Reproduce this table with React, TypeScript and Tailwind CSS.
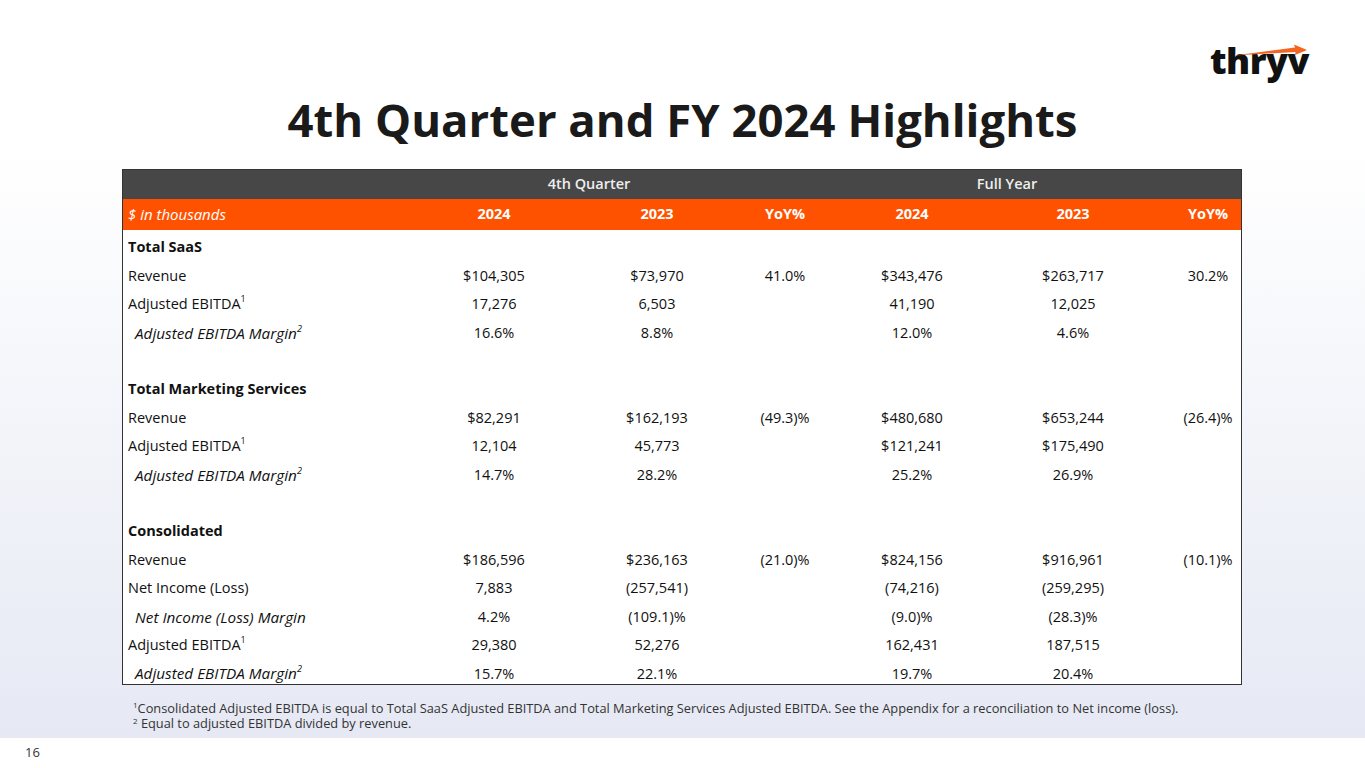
type Row =
  | { kind: 'section'; label: string }
  | { kind: 'blank' }
  | { kind: 'data'; label: string; sup?: string; italic?: boolean; values: string[] }

const rows: Row[] = [
  { kind: 'section', label: 'Total SaaS' },
  { kind: 'data', label: 'Revenue', values: ['$104,305', '$73,970', '41.0%', '$343,476', '$263,717', '30.2%'] },
  { kind: 'data', label: 'Adjusted EBITDA', sup: '1', values: ['17,276', '6,503', '', '41,190', '12,025', ''] },
  { kind: 'data', label: 'Adjusted EBITDA Margin', sup: '2', italic: true, values: ['16.6%', '8.8%', '', '12.0%', '4.6%', ''] },
  { kind: 'blank' },
  { kind: 'section', label: 'Total Marketing Services' },
  { kind: 'data', label: 'Revenue', values: ['$82,291', '$162,193', '(49.3)%', '$480,680', '$653,244', '(26.4)%'] },
  { kind: 'data', label: 'Adjusted EBITDA', sup: '1', values: ['12,104', '45,773', '', '$121,241', '$175,490', ''] },
  { kind: 'data', label: 'Adjusted EBITDA Margin', sup: '2', italic: true, values: ['14.7%', '28.2%', '', '25.2%', '26.9%', ''] },
  { kind: 'blank' },
  { kind: 'section', label: 'Consolidated' },
  { kind: 'data', label: 'Revenue', values: ['$186,596', '$236,163', '(21.0)%', '$824,156', '$916,961', '(10.1)%'] },
  { kind: 'data', label: 'Net Income (Loss)', values: ['7,883', '(257,541)', '', '(74,216)', '(259,295)', ''] },
  { kind: 'data', label: 'Net Income (Loss) Margin', italic: true, values: ['4.2%', '(109.1)%', '', '(9.0)%', '(28.3)%', ''] },
  { kind: 'data', label: 'Adjusted EBITDA', sup: '1', values: ['29,380', '52,276', '', '162,431', '187,515', ''] },
  { kind: 'data', label: 'Adjusted EBITDA Margin', sup: '2', italic: true, values: ['15.7%', '22.1%', '', '19.7%', '20.4%', ''] },
]

const grid = 'grid grid-cols-[291px_160px_166px_90px_164px_181px_66px]'
const headers = ['2024', '2023', 'YoY%', '2024', '2023', 'YoY%']

function Logo() {
  return (
    <div className="relative mt-[43px] mr-[56px] text-[36px] leading-none font-extrabold tracking-[-0.5px] text-[#111]">
      thryv
      <svg className="absolute left-0 top-0" width="100" height="20" viewBox="0 0 100 20">
        <path d="M24 12.5 L85 4.6 L84 1.5 L97 7 L85 12 L85.5 9 Z" fill="#f26522" />
      </svg>
    </div>
  )
}

export default function App() {
  return (
    <div className="flex h-[768px] w-[1365px] flex-col font-['Open_Sans',sans-serif] text-[#111]">
      <div className="flex h-[738px] flex-col bg-gradient-to-b from-white from-20% to-[#e6e9f4]">
        <div className="flex justify-end">
          <Logo />
        </div>
        <h1 className="mt-[13px] text-center text-[45.5px] font-bold leading-[1.2] text-[#1a1a1a]">
          4th Quarter and FY 2024 Highlights
        </h1>

        <div className="mt-[22px] ml-[122px] w-[1120px] border border-[#333] bg-white text-[14.5px]">
          <div className="grid h-[29px] grid-cols-[291px_350px_178px_130px_1fr] items-center bg-[#474747] font-semibold text-[#eee]">
            <div />
            <div className="text-center">4th Quarter</div>
            <div />
            <div className="text-center">Full Year</div>
            <div />
          </div>
          <div className={`${grid} h-[31px] items-center bg-[#ff5200] text-white`}>
            <div className="pl-[5px] text-[15px] italic">$ in thousands</div>
            {headers.map((h, i) => (
              <div key={i} className={`text-center font-bold ${i === 4 ? 'pr-[23px]' : ''}`}>
                {h}
              </div>
            ))}
          </div>
          {rows.map((row, idx) => {
            if (row.kind === 'blank') return <div key={idx} className="h-[28.4px]" />
            if (row.kind === 'section')
              return (
                <div key={idx} className="flex h-[28.4px] items-center pt-[7px] pl-[5px] font-bold">
                  {row.label}
                </div>
              )
            return (
              <div key={idx} className={`${grid} h-[28.4px] items-center pt-[7px]`}>
                <div className={row.italic ? 'pl-[12px] text-[15.3px] italic' : 'pl-[5px]'}>
                  {row.label}
                  {row.sup && <sup className="top-[-7px] text-[9px]">{row.sup}</sup>}
                </div>
                {row.values.map((v, i) => (
                  <div key={i} className={`text-center ${i === 4 ? 'pr-[23px]' : ''}`}>
                    {v}
                  </div>
                ))}
              </div>
            )
          })}
        </div>

        <div className="mt-[16px] ml-[133px] text-[12.8px] leading-[15px] text-[#333]">
          <p>
            <sup className="top-[-5px] text-[8px]">1</sup>
            Consolidated Adjusted EBITDA is equal to Total SaaS Adjusted EBITDA and Total Marketing Services Adjusted EBITDA. See the Appendix for a reconciliation to Net income (loss).
          </p>
          <p>
            <sup className="top-[-4px] text-[8px]">2</sup> Equal to adjusted EBITDA divided by revenue.
          </p>
        </div>
      </div>
      <div className="flex h-[30px] items-center bg-white pl-[25px] text-[13px] text-[#333]">16</div>
    </div>
  )
}
